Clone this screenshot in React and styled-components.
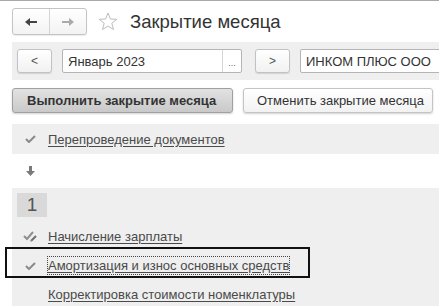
import React from 'react';
import styled, { createGlobalStyle } from 'styled-components';

const GlobalStyle = createGlobalStyle`
  html, body {
    margin: 0;
    padding: 0;
    background: #fff;
    font-family: "Liberation Sans", Arial, sans-serif;
    font-size: 13px;
    color: #333;
    overflow: hidden;
  }
`;

const Page = styled.div`
  width: 439px;
  height: 306px;
  border-top: 1px solid #a8a8a8;
  box-sizing: border-box;
  overflow: hidden;
`;

const Header = styled.div`
  height: 41px;
  display: flex;
  align-items: center;
  padding-left: 12px;
`;

const NavGroup = styled.div`
  display: flex;
  height: 25px;
  border: 1px solid #c4c4c4;
  border-radius: 3px;
  background: linear-gradient(#fff, #f3f3f3);
  box-shadow: 0 1px 1px rgba(0, 0, 0, 0.08);
`;

const NavBtn = styled.div`
  width: 36px;
  display: flex;
  align-items: center;
  justify-content: center;
  & + & {
    border-left: 1px solid #d4d4d4;
  }
`;

const Star = styled.div`
  margin-left: 11px;
  display: flex;
  align-items: center;
`;

const Title = styled.h1`
  margin: 0 0 0 12px;
  font-size: 18.5px;
  font-weight: normal;
  color: #333;
`;

const Toolbar = styled.div`
  margin-left: 12px;
  height: 38px;
  background: #efefef;
  display: flex;
  align-items: center;
  padding-left: 5px;
`;

const SmallBtn = styled.div`
  width: 35px;
  height: 24px;
  box-sizing: border-box;
  border: 1px solid #c2c2c2;
  border-radius: 3px;
  background: linear-gradient(#fff, #f1f1f1);
  box-shadow: 0 1px 1px rgba(0, 0, 0, 0.12);
  display: flex;
  align-items: center;
  justify-content: center;
  color: #555;
  font-size: 12px;
  margin-left: ${p => p.$ml || 0}px;
  flex-shrink: 0;
`;

const Field = styled.div`
  width: ${p => p.$w}px;
  height: 24px;
  box-sizing: border-box;
  border: 1px solid #b5b5b5;
  border-radius: 2px;
  background: #fff;
  display: flex;
  align-items: center;
  margin-left: ${p => p.$ml || 0}px;
  flex-shrink: 0;
`;

const FieldText = styled.span`
  flex: 1;
  padding-left: 5px;
  color: #333;
  white-space: nowrap;
`;

const Dots = styled.span`
  width: 19px;
  height: 100%;
  border-left: 1px solid #d6d6d6;
  display: flex;
  align-items: center;
  justify-content: center;
  font-size: 9px;
  color: #666;
  padding-top: 3px;
  box-sizing: border-box;
`;

const Actions = styled.div`
  display: flex;
  gap: 10px;
  margin: 8px 0 0 12px;
`;

const ActionBtn = styled.div`
  width: ${p => p.$w}px;
  height: 25px;
  box-sizing: border-box;
  border: 1px solid ${p => (p.$primary ? '#a0a0a0' : '#c4c4c4')};
  border-radius: 3px;
  background: ${p => (p.$primary ? 'linear-gradient(#e2e2e2, #c9c9c9)' : 'linear-gradient(#fff, #f2f2f2)')};
  box-shadow: 0 1px 2px rgba(0, 0, 0, 0.18);
  font-weight: ${p => (p.$primary ? 'bold' : 'normal')};
  color: #333;
  display: flex;
  align-items: center;
  padding-left: ${p => (p.$primary ? 14 : 13)}px;
`;

const List = styled.div`
  margin: 11px 0 0 12px;
`;

const Row = styled.div`
  position: relative;
  height: ${p => p.$h || 30}px;
  display: flex;
  align-items: center;
  background: ${p => (p.$gray ? '#efefef' : 'transparent')};
`;

const Group = styled.div`
  background: #efefef;
  padding-top: 5px;
  height: 200px;
`;

const Badge = styled.div`
  margin: 0 0 5px 5px;
  width: 30px;
  height: 24px;
  background: #d9d9d9;
  color: #555;
  font-size: 19px;
  display: flex;
  align-items: center;
  justify-content: center;
`;

const IconCell = styled.div`
  width: 36px;
  display: flex;
  justify-content: center;
  align-items: center;
`;

const Link = styled.span`
  color: #4a4a4a;
  text-decoration: underline;
  text-underline-offset: 2px;
  padding: 1px 0;
  border: 1px dotted ${p => (p.$focus ? '#444' : 'transparent')};
  margin-left: -1px;
  white-space: nowrap;
`;

const Focused = styled(Row)`
  &::after {
    content: '';
    position: absolute;
    left: -7px;
    top: -4px;
    width: 305px;
    height: 31px;
    border: 2px solid #111;
    box-sizing: border-box;
  }
`;

const ArrowLeft = ({ color }) => (
  <svg width="14" height="10" viewBox="0 0 14 10">
    <path d="M1 5 L6 1 L6 4 L13 4 L13 6 L6 6 L6 9 Z" fill={color} />
  </svg>
);

const ArrowRight = ({ color }) => (
  <svg width="14" height="10" viewBox="0 0 14 10">
    <path d="M13 5 L8 1 L8 4 L1 4 L1 6 L8 6 L8 9 Z" fill={color} />
  </svg>
);

const StarIcon = () => (
  <svg width="20" height="19" viewBox="0 0 20 19">
    <path
      d="M10 1 L12.4 7 L18.8 7.3 L13.8 11.3 L15.5 17.6 L10 14 L4.5 17.6 L6.2 11.3 L1.2 7.3 L7.6 7 Z"
      fill="none"
      stroke="#bcbcbc"
      strokeWidth="1"
      strokeLinejoin="round"
    />
  </svg>
);

const Check = () => (
  <svg width="11" height="8" viewBox="0 0 11 8">
    <path d="M1 4 L4 7 L10 1" fill="none" stroke="#8a8a8a" strokeWidth="2" />
  </svg>
);

const DoubleCheck = () => (
  <svg width="15" height="11" viewBox="0 0 15 11">
    <path d="M1 5 L4 8 L10 1" fill="none" stroke="#8f8f8f" strokeWidth="2" />
    <path d="M8 10 L13 5" fill="none" stroke="#6e6e6e" strokeWidth="2" />
    <path d="M7 9 L9 9 L8 11 Z" fill="#999" />
  </svg>
);

const DownArrow = () => (
  <svg width="9" height="10" viewBox="0 0 9 10">
    <path d="M3 0 L6 0 L6 5 L9 5 L4.5 10 L0 5 L3 5 Z" fill="#7a7a7a" />
  </svg>
);

export default function App() {
  return (
    <>
      <GlobalStyle />
      <Page>
        <Header>
          <NavGroup>
            <NavBtn><ArrowLeft color="#444" /></NavBtn>
            <NavBtn><ArrowRight color="#aaa" /></NavBtn>
          </NavGroup>
          <Star><StarIcon /></Star>
          <Title>Закрытие месяца</Title>
        </Header>

        <Toolbar>
          <SmallBtn>&lt;</SmallBtn>
          <Field $w={180} $ml={10}>
            <FieldText>Январь 2023</FieldText>
            <Dots>...</Dots>
          </Field>
          <SmallBtn $ml={13}>&gt;</SmallBtn>
          <Field $w={160} $ml={10}>
            <FieldText>ИНКОМ ПЛЮС ООО</FieldText>
          </Field>
        </Toolbar>

        <Actions>
          <ActionBtn $primary $w={221}>Выполнить закрытие месяца</ActionBtn>
          <ActionBtn $w={190}>Отменить закрытие месяца</ActionBtn>
        </Actions>

        <List>
          <Row $gray>
            <IconCell><Check /></IconCell>
            <Link>Перепроведение документов</Link>
          </Row>
          <Row $h={34}>
            <IconCell><DownArrow /></IconCell>
          </Row>
          <Group>
            <Badge>1</Badge>
            <Row $h={29}>
              <IconCell><DoubleCheck /></IconCell>
              <Link>Начисление зарплаты</Link>
            </Row>
            <Focused $h={29}>
              <IconCell><Check /></IconCell>
              <Link $focus>Амортизация и износ основных средств</Link>
            </Focused>
            <Row $h={29}>
              <IconCell />
              <Link>Корректировка стоимости номенклатуры</Link>
            </Row>
          </Group>
        </List>
      </Page>
    </>
  );
}
